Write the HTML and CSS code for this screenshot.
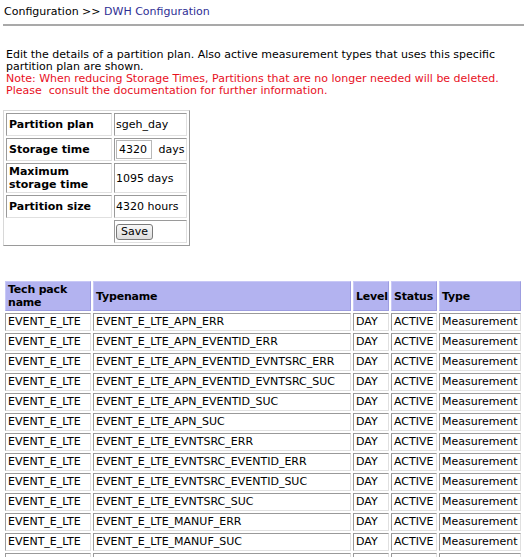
FILE: index.html
```html
<!DOCTYPE html>
<html>
<head>
<meta charset="utf-8">
<link rel="stylesheet" href="styles.css">
</head>
<body>
<div class="crumb">Configuration &gt;&gt; <a class="crumb-link" href="#">DWH Configuration</a></div>
<hr class="rule">
<p class="intro">Edit the details of a partition plan. Also active measurement types that uses this specific partition plan are shown.<br>
<span class="note">Note: When reducing Storage Times, Partitions that are no longer needed will be deleted.<br>Please&nbsp; consult the documentation for further information.</span></p>

<table class="plan">
<tr class="r1"><td class="lbl">Partition plan</td><td class="val">sgeh_day</td></tr>
<tr class="r2"><td class="lbl">Storage time</td><td class="val"><input class="num" type="text" value="4320"> days</td></tr>
<tr class="r3"><td class="lbl">Maximum storage time</td><td class="val">1095 days</td></tr>
<tr class="r4"><td class="lbl">Partition size</td><td class="val">4320 hours</td></tr>
<tr class="r5"><td class="empty"></td><td class="val"><button class="save">Save</button></td></tr>
</table>

<table class="types">
<tr><th class="c1">Tech pack name</th><th class="c2">Typename</th><th class="c3">Level</th><th class="c4">Status</th><th class="c5">Type</th></tr>
<tr><td>EVENT_E_LTE</td><td>EVENT_E_LTE_APN_ERR</td><td>DAY</td><td>ACTIVE</td><td>Measurement</td></tr>
<tr><td>EVENT_E_LTE</td><td>EVENT_E_LTE_APN_EVENTID_ERR</td><td>DAY</td><td>ACTIVE</td><td>Measurement</td></tr>
<tr><td>EVENT_E_LTE</td><td>EVENT_E_LTE_APN_EVENTID_EVNTSRC_ERR</td><td>DAY</td><td>ACTIVE</td><td>Measurement</td></tr>
<tr><td>EVENT_E_LTE</td><td>EVENT_E_LTE_APN_EVENTID_EVNTSRC_SUC</td><td>DAY</td><td>ACTIVE</td><td>Measurement</td></tr>
<tr><td>EVENT_E_LTE</td><td>EVENT_E_LTE_APN_EVENTID_SUC</td><td>DAY</td><td>ACTIVE</td><td>Measurement</td></tr>
<tr><td>EVENT_E_LTE</td><td>EVENT_E_LTE_APN_SUC</td><td>DAY</td><td>ACTIVE</td><td>Measurement</td></tr>
<tr><td>EVENT_E_LTE</td><td>EVENT_E_LTE_EVNTSRC_ERR</td><td>DAY</td><td>ACTIVE</td><td>Measurement</td></tr>
<tr><td>EVENT_E_LTE</td><td>EVENT_E_LTE_EVNTSRC_EVENTID_ERR</td><td>DAY</td><td>ACTIVE</td><td>Measurement</td></tr>
<tr><td>EVENT_E_LTE</td><td>EVENT_E_LTE_EVNTSRC_EVENTID_SUC</td><td>DAY</td><td>ACTIVE</td><td>Measurement</td></tr>
<tr><td>EVENT_E_LTE</td><td>EVENT_E_LTE_EVNTSRC_SUC</td><td>DAY</td><td>ACTIVE</td><td>Measurement</td></tr>
<tr><td>EVENT_E_LTE</td><td>EVENT_E_LTE_MANUF_ERR</td><td>DAY</td><td>ACTIVE</td><td>Measurement</td></tr>
<tr><td>EVENT_E_LTE</td><td>EVENT_E_LTE_MANUF_SUC</td><td>DAY</td><td>ACTIVE</td><td>Measurement</td></tr>
<tr><td>EVENT_E_LTE</td><td>EVENT_E_LTE_MANUF_TAC_ERR</td><td>DAY</td><td>ACTIVE</td><td>Measurement</td></tr>
</table>
</body>
</html>
```
FILE: styles.css
```css
html, body {
  margin: 0;
  padding: 0;
  background: #ffffff;
}
body {
  padding: 5px 0 0 3px;
  font-family: "DejaVu Sans", Verdana, sans-serif;
  font-size: 11px;
  color: #000000;
  overflow: hidden;
}
.crumb {
  padding-left: 1px;
  line-height: 14px;
  height: 14px;
}
.crumb-link {
  color: #2e2e94;
  text-decoration: none;
}
.rule {
  margin: 5px 0 0 0;
  border: 0;
  border-top: 2px solid #a9a9a9;
  height: 0;
}
.intro {
  margin: 23px 0 0 3px;
  line-height: 12px;
  width: 512px;
}
.note {
  color: #e8101e;
}
table {
  font-family: "DejaVu Sans", Verdana, sans-serif;
  font-size: 11px;
}
.plan {
  margin-top: 13px;
  border-collapse: separate;
  border-spacing: 2px;
  border: 1px solid;
  border-color: #d8d8d8 #9a9a9a #9a9a9a #d8d8d8;
}
.plan td {
  border: 1px solid;
  border-color: #9a9a9a #e0e0e0 #e0e0e0 #9a9a9a;
  padding: 1px 2px;
  line-height: 13px;
}
.plan .r1, .plan .r2, .plan .r4 { height: 23px; }
.plan .r3 { height: 29px; }
.plan .r5 { height: 23px; }
.plan .lbl {
  font-weight: bold;
  width: 100px;
}
.plan .val {
  width: 64px;
  padding-left: 1px;
  white-space: nowrap;
}
.plan .empty {
  border: 0;
}
.num {
  width: 30px;
  height: 17px;
  padding: 0 2px;
  border: 1px solid #b8b8b8;
  font-family: "DejaVu Sans", Verdana, sans-serif;
  font-size: 11px;
  margin: 0 3px 0 0;
  vertical-align: middle;
}
.save {
  font-family: "DejaVu Sans", Verdana, sans-serif;
  font-size: 11px;
  line-height: 12px;
  padding: 1px 4px;
  border: 1px solid #7a7a7a;
  border-radius: 3px;
  background: linear-gradient(#f8f8f8, #dcdcdc);
  color: #000;
}
.types {
  margin-top: 33px;
  border-collapse: separate;
  border-spacing: 2px;
  table-layout: fixed;
  width: 520px;
}
.types th {
  background: #b3b3f0;
  text-align: left;
  font-weight: bold;
  padding: 1px 2px;
  line-height: 13px;
  letter-spacing: -0.2px;
  border: 1px solid;
  border-color: #c8c8f6 #9d9de0 #9d9de0 #c8c8f6;
  overflow: hidden;
}
.types td {
  border: 1px solid;
  border-color: #9a9a9a #e0e0e0 #e0e0e0 #9a9a9a;
  padding: 1px 2px;
  line-height: 14px;
  white-space: nowrap;
  overflow: hidden;
}
.types .c1 { width: 80px; }
.types .c2 { width: 252px; }
.types .c3 { width: 30px; }
.types .c4 { width: 40px; }
.types .c5 { width: 76px; }
```
